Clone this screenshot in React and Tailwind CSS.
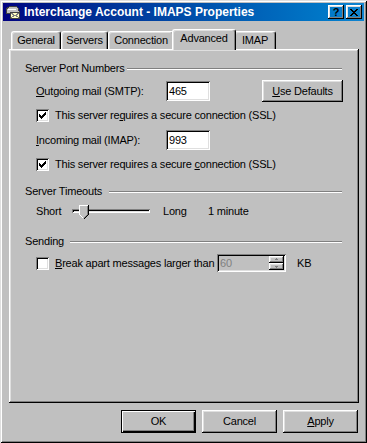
const raised =
  'shadow-[inset_-1px_-1px_#000,inset_1px_1px_#fff,inset_-2px_-2px_#808080,inset_2px_2px_#dfdfdf]';
const sunken =
  'shadow-[inset_1px_1px_#808080,inset_-1px_-1px_#fff,inset_2px_2px_#000,inset_-2px_-2px_#dfdfdf]';

const Header = ({ label, gap }) => (
  <div className="flex items-center h-[13px]">
    <span>{label}</span>
    <div className={`flex-1 h-[2px] border-t border-t-[#808080] border-b border-b-white mr-[1px] ${gap}`} />
  </div>
);

const Check = ({ checked }) => (
  <div className={`w-[13px] h-[13px] bg-white shrink-0 flex items-center justify-center ${sunken}`}>
    {checked && (
      <svg width="7" height="7" viewBox="0 0 7 7" shapeRendering="crispEdges">
        <path
          d="M6 0h1v1h-1z M5 1h2v1h-2z M0 2h1v1h-1z M4 2h3v1h-3z M0 3h2v1h-2z M3 3h3v1h-3z M0 4h5v1h-5z M1 5h3v1h-3z M2 6h1v1h-1z"
          fill="#000"
        />
      </svg>
    )}
  </div>
);

const Field = ({ value }) => (
  <div className={`w-[44px] h-[20px] bg-white flex items-center pl-[3px] ${sunken}`}>{value}</div>
);

const Button = ({ children, isDefault, className = '' }) =>
  isDefault ? (
    <div
      className={`h-[23px] flex items-center justify-center border border-black shadow-[inset_1px_1px_#fff,inset_-1px_-1px_#000,inset_-2px_-2px_#808080] ${className}`}
    >
      {children}
    </div>
  ) : (
    <div className={`flex items-center justify-center ${raised} ${className}`}>{children}</div>
  );

const Tab = ({ label, width, active }) =>
  active ? (
    <div
      className={`${width} h-[21px] -mx-[2px] mb-[-1px] relative z-10 bg-[#c0c0c0] border-t border-l border-r border-t-white border-l-white border-r-black rounded-t-[3px] shadow-[inset_-1px_0_#808080,inset_1px_1px_#dfdfdf] flex justify-center pt-[2px]`}
    >
      {label}
    </div>
  ) : (
    <div
      className={`${width} h-[18px] border-t border-l border-r border-t-white border-l-white border-r-black rounded-t-[3px] shadow-[inset_-1px_0_#808080,inset_1px_1px_#dfdfdf] flex justify-center pt-[2px]`}
    >
      {label}
    </div>
  );

const TitleIcon = () => (
  <svg width="16" height="16" viewBox="0 0 16 16" shapeRendering="crispEdges">
    <path d="M1 8 C1 4 4 2 8 2 C12 2 14 4 14 7 L14 9 L1 9 Z" fill="#c0c0c0" stroke="#404040" />
    <path d="M3 5 h8" stroke="#fff" />
    <rect x="5.5" y="8.5" width="9" height="6" fill="#ffffc0" stroke="#404040" />
    <path d="M6 9 L10 12 L14 9 M6 14 L9 11.5 M14 14 L11 11.5" stroke="#808080" fill="none" />
  </svg>
);

const CloseGlyph = () => (
  <svg width="8" height="7" viewBox="0 0 8 7" shapeRendering="crispEdges">
    <path
      d="M0 0h2v1h-2z M6 0h2v1h-2z M1 1h2v1h-2z M5 1h2v1h-2z M2 2h4v1h-4z M3 3h2v1h-2z M2 4h4v1h-4z M1 5h2v1h-2z M5 5h2v1h-2z M0 6h2v1h-2z M6 6h2v1h-2z"
      fill="#000"
    />
  </svg>
);

const Thumb = () => (
  <svg width="10" height="14" viewBox="0 0 10 14" shapeRendering="crispEdges">
    <polygon points="0,0 10,0 10,10 5,14 0,10" fill="#c0c0c0" />
    <path d="M0.5 10 V0.5 H9" stroke="#fff" fill="none" />
    <path d="M9.5 0 V9.5 L5 14" stroke="#000" fill="none" />
    <path d="M8.5 1 V9.5 L5 13" stroke="#808080" fill="none" />
    <path d="M0.5 9.5 L4.5 13.5" stroke="#fff" fill="none" />
  </svg>
);

export default function App() {
  return (
    <div className="w-[367px] h-[443px] bg-[#c0c0c0] p-[3px] flex flex-col text-[11px] leading-[13px] tracking-[-0.2px] whitespace-nowrap text-black font-['Liberation_Sans',Arial,sans-serif] shadow-[inset_1px_1px_#dfdfdf,inset_-1px_-1px_#000,inset_2px_2px_#fff,inset_-2px_-2px_#808080]">
      {/* title bar */}
      <div className="h-[18px] flex items-center pl-[2px] pr-[2px] bg-linear-to-r from-[#000080] to-[#1084d0]">
        <TitleIcon />
        <span className="ml-[3px] font-bold text-white text-[12px] tracking-[0px]">
          Interchange Account - IMAPS Properties
        </span>
        <div className="ml-auto flex gap-[2px]">
          <div className={`w-[16px] h-[14px] flex items-center justify-center font-bold ${raised}`}>?</div>
          <div className={`w-[16px] h-[14px] flex items-center justify-center ${raised}`}>
            <CloseGlyph />
          </div>
        </div>
      </div>

      {/* tabs */}
      <div className="mt-[8px] ml-[6px] w-[350px] flex flex-col">
        <div className="flex items-end h-[20px] pl-[2px]">
          <Tab label="General" width="w-[50px]" />
          <Tab label="Servers" width="w-[47px]" />
          <Tab label="Connection" width="w-[66px]" />
          <Tab label="Advanced" width="w-[64px]" active />
          <Tab label="IMAP" width="w-[42px]" />
        </div>

        <div className={`h-[354px] flex flex-col px-[16px] pt-[13px] ${raised}`}>
          <Header label="Server Port Numbers" gap="ml-[2px]" />

          <div className="mt-[5px] h-[22px] flex items-center pl-[11px]">
            <span className="w-[130px]">
              <span className="underline">O</span>utgoing mail (SMTP):
            </span>
            <Field value="465" />
            <Button className="ml-auto w-[81px] h-[22px]">
              <span className="underline">U</span>se Defaults
            </Button>
          </div>

          <div className="mt-[6px] h-[14px] flex items-center pl-[11px]">
            <Check checked />
            <span className="ml-[6px]">
              This server re<span className="underline">q</span>uires a secure connection (SSL)
            </span>
          </div>

          <div className="mt-[8px] h-[20px] flex items-center pl-[11px]">
            <span className="w-[130px]">
              <span className="underline">I</span>ncoming mail (IMAP):
            </span>
            <Field value="993" />
          </div>

          <div className="mt-[7px] h-[14px] flex items-center pl-[11px]">
            <Check checked />
            <span className="ml-[6px]">
              This server requires a secure <span className="underline">c</span>onnection (SSL)
            </span>
          </div>

          <div className="mt-[14px]">
            <Header label="Server Timeouts" gap="ml-[7px]" />
          </div>

          <div className="mt-[3px] h-[20px] flex items-center pl-[11px]">
            <span className="w-[36px]">Short</span>
            <div className="relative w-[78px] h-[20px] flex items-center">
              <div className="w-full h-[4px] shadow-[inset_1px_1px_#808080,inset_-1px_-1px_#fff,inset_2px_2px_#000,inset_-2px_-2px_#dfdfdf]" />
              <div className="absolute left-[7px] top-[4px] flex">
                <Thumb />
              </div>
            </div>
            <span className="ml-[13px] w-[45px]">Long</span>
            <span>1 minute</span>
          </div>

          <div className="mt-[14px]">
            <Header label="Sending" gap="ml-[6px]" />
          </div>

          <div className="mt-[6px] h-[18px] flex items-center pl-[11px]">
            <Check />
            <span className="ml-[6px] w-[162px] shrink-0">
              <span className="underline">B</span>reak apart messages larger than
            </span>
            <div className={`w-[69px] h-[18px] shrink-0 flex items-center pl-[3px] pr-[2px] ${sunken}`}>
              <span className="text-[#808080]">60</span>
              <div className="ml-auto flex flex-col">
                <div className={`w-[15px] h-[7px] flex items-center justify-center ${raised}`}>
                  <svg width="5" height="3" viewBox="0 0 5 3" shapeRendering="crispEdges">
                    <path d="M2 0h1v1h-1z M1 1h3v1h-3z" fill="#808080" />
                  </svg>
                </div>
                <div className={`w-[15px] h-[7px] flex items-center justify-center ${raised}`}>
                  <svg width="5" height="3" viewBox="0 0 5 3" shapeRendering="crispEdges">
                    <path d="M1 1h3v1h-3z M2 2h1v1h-1z" fill="#808080" />
                  </svg>
                </div>
              </div>
            </div>
            <span className="ml-[11px]">KB</span>
          </div>
        </div>
      </div>

      {/* dialog buttons */}
      <div className="mt-[7px] mr-[6px] flex justify-end gap-[6px]">
        <Button isDefault className="w-[75px]">
          OK
        </Button>
        <Button className="w-[75px] h-[23px]">Cancel</Button>
        <Button className="w-[75px] h-[23px]">
          <span className="underline">A</span>pply
        </Button>
      </div>
    </div>
  );
}
